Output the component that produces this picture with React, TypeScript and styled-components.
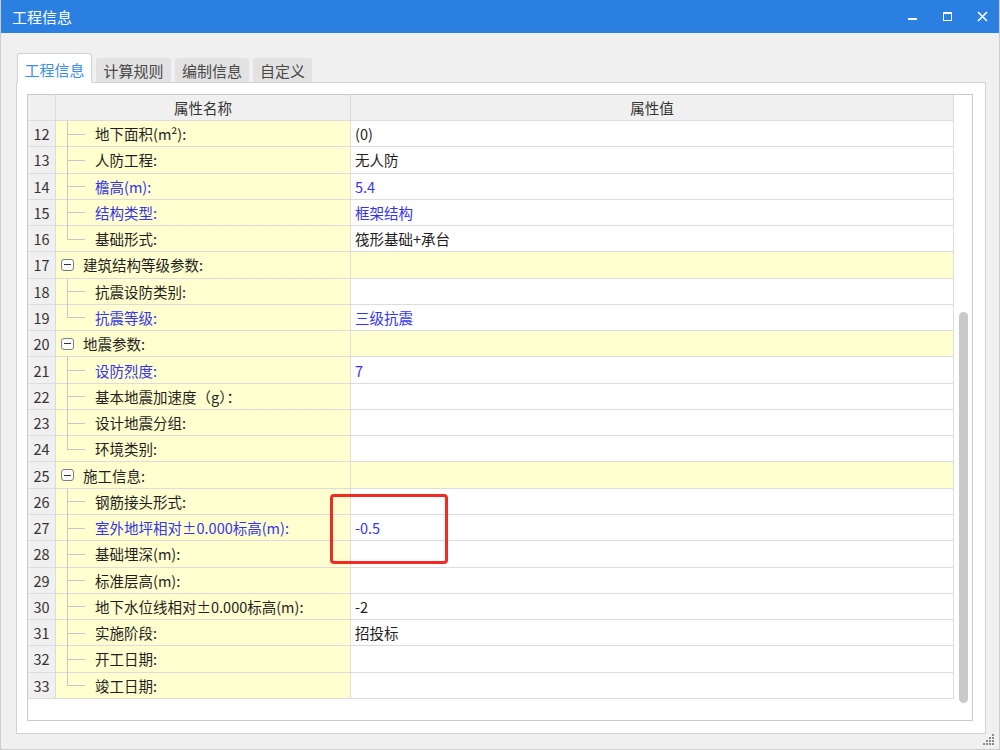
import React, { FC } from 'react';
import styled, { createGlobalStyle } from 'styled-components';

const GlobalStyle = createGlobalStyle`
  html, body {
    margin: 0;
    padding: 0;
    background: #f0f0f0;
  }
  * {
    box-sizing: border-box;
  }
`;

const font = `"Microsoft YaHei", "Noto Sans CJK SC", "Noto Sans", sans-serif`;
const blue = '#3434ee';
const lineColor = '#dcdcdc';
const rowHeight = '26.27px';

type Row = {
  no: number;
  name: string;
  value?: string;
  blue?: boolean;
  group?: boolean;
  last?: boolean;
};

const rows: Row[] = [
  { no: 12, name: '地下面积(m²):', value: '(0)' },
  { no: 13, name: '人防工程:', value: '无人防' },
  { no: 14, name: '檐高(m):', value: '5.4', blue: true },
  { no: 15, name: '结构类型:', value: '框架结构', blue: true },
  { no: 16, name: '基础形式:', value: '筏形基础+承台', last: true },
  { no: 17, name: '建筑结构等级参数:', group: true },
  { no: 18, name: '抗震设防类别:' },
  { no: 19, name: '抗震等级:', value: '三级抗震', blue: true, last: true },
  { no: 20, name: '地震参数:', group: true },
  { no: 21, name: '设防烈度:', value: '7', blue: true },
  { no: 22, name: '基本地震加速度（g）：' },
  { no: 23, name: '设计地震分组:' },
  { no: 24, name: '环境类别:', last: true },
  { no: 25, name: '施工信息:', group: true },
  { no: 26, name: '钢筋接头形式:' },
  { no: 27, name: '室外地坪相对±0.000标高(m):', value: '-0.5', blue: true },
  { no: 28, name: '基础埋深(m):' },
  { no: 29, name: '标准层高(m):' },
  { no: 30, name: '地下水位线相对±0.000标高(m):', value: '-2' },
  { no: 31, name: '实施阶段:', value: '招投标' },
  { no: 32, name: '开工日期:' },
  { no: 33, name: '竣工日期:', last: true },
];

const tabs = ['工程信息', '计算规则', '编制信息', '自定义'];

const Window = styled.div`
  position: relative;
  width: 1000px;
  height: 750px;
  display: flex;
  flex-direction: column;
  background: #f0f0f0;
  border: 1px solid #cdcdcd;
  border-top: none;
  font-family: ${font};
`;

const TitleBar = styled.div`
  height: 33px;
  flex-shrink: 0;
  background: #2b7fe1;
  display: flex;
  align-items: center;
  padding-left: 11px;
  color: #fff;
  font-size: 15px;
`;

const Title = styled.span`
  flex: 1;
  margin-top: -1px;
`;

const WinButtons = styled.div`
  display: flex;
  align-items: center;
  gap: 16px;
  padding-right: 7px;
`;

const WinButton = styled.span`
  width: 19px;
  height: 19px;
  display: flex;
  align-items: center;
  justify-content: center;
`;

const Body = styled.div`
  flex: 1;
  display: flex;
  flex-direction: column;
  padding: 20px 15px 15px 15px;
`;

const TabBar = styled.div`
  display: flex;
  align-items: flex-end;
  gap: 4px;
  height: 30px;
  padding-left: 1px;
  margin-bottom: -1px;
  position: relative;
  z-index: 1;
`;

const Tab = styled.div<{ $active?: boolean; $w: number }>`
  width: ${(p) => p.$w}px;
  height: ${(p) => (p.$active ? 30 : 25)}px;
  display: flex;
  align-items: center;
  justify-content: center;
  font-size: 15px;
  border-radius: 3px 3px 0 0;
  color: ${(p) => (p.$active ? '#3d8ee6' : '#474747')};
  background: ${(p) => (p.$active ? '#fff' : '#e2e2e2')};
  border: 1px solid ${(p) => (p.$active ? '#d2d2d2' : '#e2e2e2')};
  border-bottom: ${(p) => (p.$active ? '1px solid #fff' : '1px solid #d2d2d2')};
  padding-top: ${(p) => (p.$active ? 2 : 0)}px;
`;

const Panel = styled.div`
  flex: 1;
  width: 970px;
  background: #fff;
  border: 1px solid #d2d2d2;
  padding: 11px 12px 12px 10px;
  display: flex;
`;

const Grid = styled.div`
  position: relative;
  flex: 1;
  display: flex;
  border: 1px solid #cacaca;
`;

const Table = styled.div`
  width: 926px;
  display: flex;
  flex-direction: column;
`;

const HeaderRow = styled.div`
  display: flex;
  height: 26px;
  background: #f0f0f0;
  border-bottom: 1px solid ${lineColor};
  font-size: 14.5px;
  color: #333;
`;

const HeaderCell = styled.div<{ $w?: number }>`
  ${(p) => (p.$w ? `width: ${p.$w}px;` : 'flex: 1;')}
  display: flex;
  align-items: center;
  justify-content: center;
  border-right: 1px solid ${lineColor};
`;

const DataRow = styled.div`
  display: flex;
  height: ${rowHeight};
  border-bottom: 1px solid ${lineColor};
  font-size: 14.5px;
  color: #1e1e1e;
`;

const NoCell = styled.div`
  width: 28px;
  background: #f0f0f0;
  border-right: 1px solid ${lineColor};
  display: flex;
  align-items: center;
  justify-content: center;
  color: #333;
  font-size: 14.5px;
`;

const NameCell = styled.div<{ $blue?: boolean }>`
  position: relative;
  width: 295px;
  background: #ffffcf;
  border-right: 1px solid ${lineColor};
  display: flex;
  align-items: center;
  color: ${(p) => (p.$blue ? blue : '#1e1e1e')};
`;

const ValueCell = styled.div<{ $blue?: boolean; $group?: boolean }>`
  flex: 1;
  background: ${(p) => (p.$group ? '#ffffcf' : '#fff')};
  border-right: 1px solid ${lineColor};
  display: flex;
  align-items: center;
  padding-left: 4px;
  color: ${(p) => (p.$blue ? blue : '#1e1e1e')};
`;

const TreeV = styled.span<{ $last?: boolean }>`
  position: absolute;
  left: 11px;
  top: 0;
  width: 1px;
  height: ${(p) => (p.$last ? '50%' : 'calc(100% + 1px)')};
  background: #c6c6c6;
`;

const TreeH = styled.span`
  position: absolute;
  left: 11px;
  top: 50%;
  width: 18px;
  height: 1px;
  background: #c6c6c6;
`;

const ChildText = styled.span`
  padding-left: 39px;
`;

const Toggle = styled.span`
  width: 13px;
  height: 12px;
  margin-left: 5px;
  border: 1px solid #7d7d7d;
  border-radius: 3px;
  background: #fff;
  display: flex;
  align-items: center;
  justify-content: center;
  &::after {
    content: '';
    width: 7px;
    height: 1px;
    background: #333;
  }
`;

const GroupText = styled.span`
  padding-left: 9px;
`;

const ScrollTrack = styled.div`
  flex: 1;
  background: #fff;
  display: flex;
  justify-content: center;
  padding-top: 217px;
`;

const Thumb = styled.div`
  width: 9px;
  height: 391px;
  border-radius: 5px;
  background: #c9c9c9;
`;

const Highlight = styled.div`
  position: absolute;
  left: 302px;
  top: 399px;
  width: 118px;
  height: 70px;
  border: 3px solid #f22a24;
  border-radius: 4px;
`;

const Grip = styled.svg`
  position: absolute;
  right: 4px;
  bottom: 3px;
`;

const TableRow: FC<{ row: Row }> = ({ row }) => (
  <DataRow>
    <NoCell>{row.no}</NoCell>
    <NameCell $blue={row.blue}>
      {row.group ? (
        <>
          <Toggle />
          <GroupText>{row.name}</GroupText>
        </>
      ) : (
        <>
          <TreeV $last={row.last} />
          <TreeH />
          <ChildText>{row.name}</ChildText>
        </>
      )}
    </NameCell>
    <ValueCell $blue={row.blue} $group={row.group}>
      {row.value}
    </ValueCell>
  </DataRow>
);

export default function App() {
  const tabWidths = [75, 75, 74, 59];
  return (
    <>
      <GlobalStyle />
      <Window>
        <TitleBar>
          <Title>工程信息</Title>
          <WinButtons>
            <WinButton>
              <svg width="11" height="11" viewBox="0 0 11 11">
                <rect x="1" y="7" width="9" height="2" fill="#fff" />
              </svg>
            </WinButton>
            <WinButton>
              <svg width="11" height="11" viewBox="0 0 11 11">
                <rect x="1.5" y="1.5" width="8" height="8" fill="none" stroke="#fff" strokeWidth="1" />
                <rect x="1" y="1" width="9" height="2" fill="#fff" />
              </svg>
            </WinButton>
            <WinButton>
              <svg width="11" height="11" viewBox="0 0 11 11">
                <path d="M1 1 L10 10 M10 1 L1 10" stroke="#fff" strokeWidth="1.6" />
              </svg>
            </WinButton>
          </WinButtons>
        </TitleBar>
        <Body>
          <TabBar>
            {tabs.map((t, i) => (
              <Tab key={t} $active={i === 0} $w={tabWidths[i]}>
                {t}
              </Tab>
            ))}
          </TabBar>
          <Panel>
            <Grid>
              <Table>
                <HeaderRow>
                  <HeaderCell $w={28} />
                  <HeaderCell $w={295}>属性名称</HeaderCell>
                  <HeaderCell>属性值</HeaderCell>
                </HeaderRow>
                {rows.map((row) => (
                  <TableRow key={row.no} row={row} />
                ))}
              </Table>
              <ScrollTrack>
                <Thumb />
              </ScrollTrack>
              <Highlight />
            </Grid>
          </Panel>
        </Body>
        <Grip width="12" height="12" viewBox="0 0 12 12">
          {[
            [9, 0],
            [9, 3],
            [6, 3],
            [9, 6],
            [6, 6],
            [3, 6],
            [9, 9],
            [6, 9],
            [3, 9],
            [0, 9],
          ].map(([x, y]) => (
            <rect key={`${x}-${y}`} x={x} y={y} width="2" height="2" fill="#8a8a8a" />
          ))}
        </Grip>
      </Window>
    </>
  );
}
